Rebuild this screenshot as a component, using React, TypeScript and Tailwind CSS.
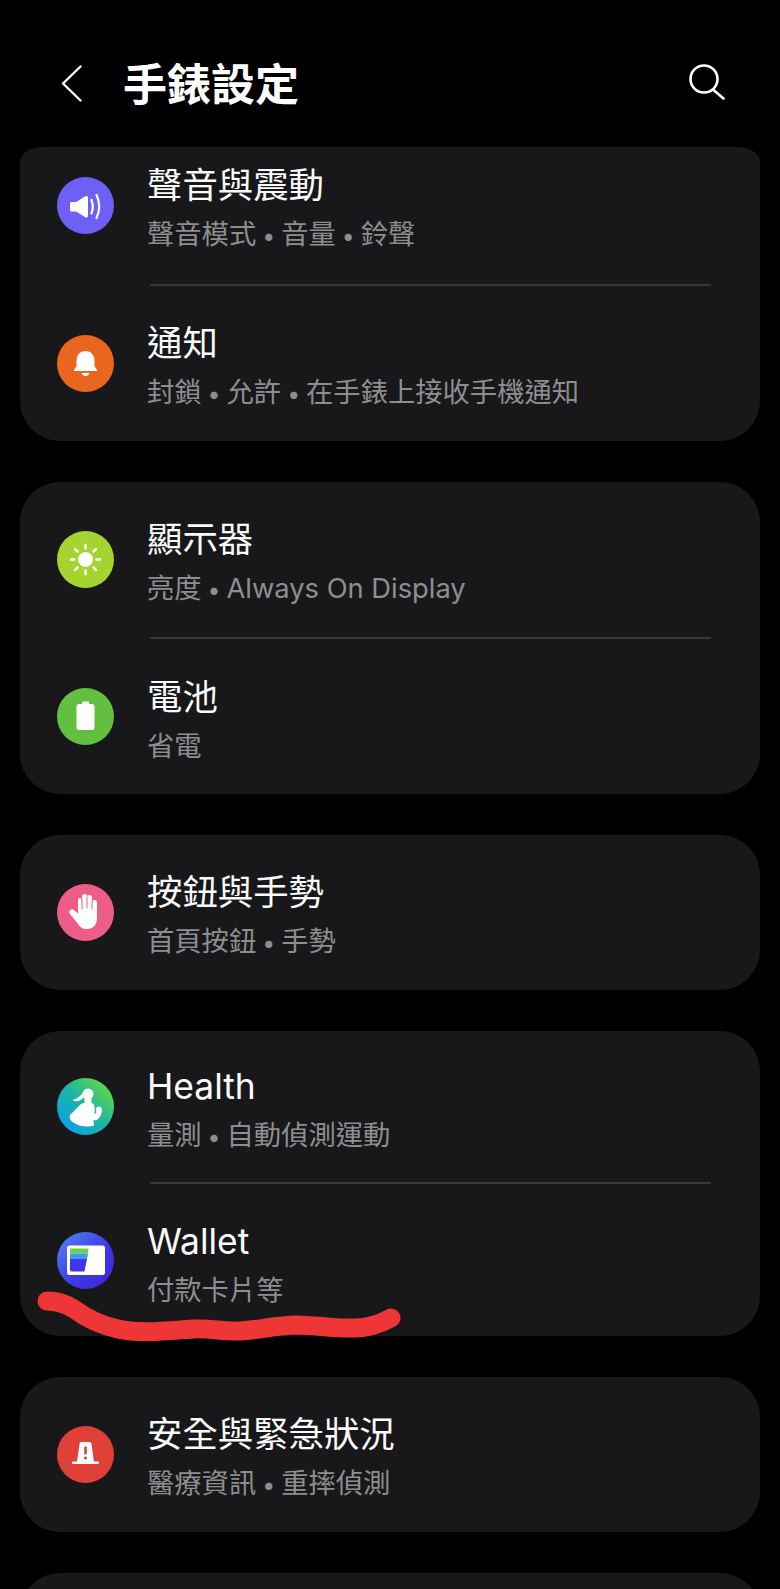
const FONT = "font-['Inter','Noto_Sans_CJK_TC','Noto_Sans_CJK_JP',sans-serif]"

function Circle({ color, children }: { color: string; children: React.ReactNode }) {
    return (
        <svg width="57" height="57" viewBox="0 0 57 57" className="shrink-0">
            <circle cx="28.5" cy="28.5" r="28.5" fill={color} />
            {children}
        </svg>
    )
}

const SoundIcon = () => (
    <Circle color="#6e60f6">
        <path d="M13 26.500q0-1.500 1.500-1.500h4.500l9-5.500q3-1.500 3 1.500v17.500q0 3-3 1.500l-9-5.500h-4.500q-1.500 0-1.500-1.500z" fill="#fff" />
        <path d="M34.500 23q2.500 6.500 0 13.500" fill="none" stroke="#fff" strokeWidth="2.200" strokeLinecap="round" />
        <path d="M39.500 18q5.500 11.500 0 23" fill="none" stroke="#fff" strokeWidth="2.200" strokeLinecap="round" />
    </Circle>
)

const BellIcon = () => (
    <Circle color="#ea651e">
        <path d="M28.500 16c-6 0-9 4.500-9 10v5.500l-2.500 3q-.5 1.500 1 1.500h21q1.500 0 1-1.500l-2.500-3V26c0-5.500-3-10-9-10z" fill="#fff" />
        <path d="M24.500 38h8q-1 3-4 3t-4-3z" fill="#fff" />
    </Circle>
)

const SunIcon = () => (
    <Circle color="#a5d32f">
        <circle cx="28.500" cy="28.500" r="7.500" fill="#fff" />
        <g stroke="#fff" strokeWidth="2.500" strokeLinecap="round">
            <path d="M28.500 14v3.500M28.500 39.500V43M14 28.500h3.500M39.500 28.500H43M18.200 18.200l2.300 2.300M36.500 36.500l2.300 2.300M18.200 38.800l2.300-2.300M36.500 20.500l2.300-2.300" />
        </g>
    </Circle>
)

const BatteryIcon = () => (
    <Circle color="#63bf3f">
        <path d="M25 14.500q0-1 1-1h5q1 0 1 1v1.500h3q2.500 0 2.500 2.500v21q0 2.500-2.500 2.500h-13q-2.500 0-2.500-2.500v-21q0-2.500 2.500-2.500H25z" fill="#fff" />
    </Circle>
)

const HandIcon = () => (
    <Circle color="#ee5c88">
        <path d="M21 26V16q0-2 2-2t2 2V12q0-2 2.500-2T30 12v.5q0-1.500 2.500-1.500t2.500 2V18q0-2 2.500-2t2.500 2v15q0 12-10.500 12-5.500 0-8-4.500L13 30q-1.500-2.500.5-4t4 .5l3.500 3z" fill="#fff" />
        <g stroke="#ee5c88" strokeWidth="1" strokeLinecap="round">
            <path d="M25 15v10M30 13v11M35 17v8" />
        </g>
    </Circle>
)

const HealthIcon = () => (
    <svg width="57" height="57" viewBox="0 0 57 57" className="shrink-0">
        <defs>
            <linearGradient id="health" x1="1" y1="0" x2="0" y2="1">
                <stop offset=".1" stopColor="#68da42" />
                <stop offset=".5" stopColor="#1bb5a6" />
                <stop offset=".9" stopColor="#0ba0e8" />
            </linearGradient>
        </defs>
        <circle cx="28.500" cy="28.500" r="28.500" fill="url(#health)" />
        <circle cx="31" cy="16" r="5.500" fill="#fff" />
        <path d="M26 15C23 18 20 21 15.500 22C19 24.500 23 23 26.500 20Z" fill="#fff" />
        <path d="M27.500 20h7v5h-7z" fill="#fff" />
        <path d="M24 26C29 23.500 33 23.500 36.500 26C38 28 38 31 37.500 36L38.500 35.500C39.500 35 39.500 33.500 39 32.500C38.500 30 40 28.500 42 28.500C44 28.500 45 30 45 32C45 35.500 43 39.500 40.500 41.500C39 42.500 38 42.500 36.500 42L37 47.500C31 49.500 22 49 15.500 44C12.500 41.500 12 38.500 13.500 36.500C17 33 20 30 24 26Z" fill="#fff" />
    </svg>
)

const WalletIcon = () => (
    <svg width="57" height="57" viewBox="0 0 57 57" className="shrink-0">
        <defs>
            <linearGradient id="wallet" x1="0" y1="0" x2="1" y2="1">
                <stop offset="0" stopColor="#4f8bf5" />
                <stop offset=".55" stopColor="#3f3ae8" />
                <stop offset="1" stopColor="#3a22d8" />
            </linearGradient>
        </defs>
        <circle cx="28.500" cy="28.500" r="28.500" fill="url(#wallet)" />
        <rect x="10" y="13.500" width="38" height="29.500" rx="2.500" fill="#fff" />
        <path d="M13 16.500h18.500L31 21.500H13z" fill="#6fd04a" />
        <path d="M13 21.500h18L30 27H13z" fill="#3d9bf0" />
        <path d="M13 27h17L27.500 39.500H15q-2 0-2-2z" fill="#3f35ea" />
    </svg>
)

const SafetyIcon = () => (
    <Circle color="#df4138">
        <path d="M22.500 18q0-2 2-2h8q2 0 2 2L37 36H20z" fill="#fff" />
        <rect x="15" y="35.500" width="27" height="2.500" rx="1" fill="#fff" />
        <rect x="27.200" y="20.500" width="2.600" height="8" rx="1" fill="#df4138" />
        <circle cx="28.500" cy="32" r="1.600" fill="#df4138" />
    </Circle>
)

function Row({ icon, title, sub, height, offset = 'pb-0' }: { icon: React.ReactNode; title: string; sub: string[]; height: string; offset?: string }) {
    return (
        <div className={`flex items-center pl-[37px] ${height} ${offset}`}>
            {icon}
            <div className="ml-[33px] mt-[12px] flex flex-col">
                <div className="text-[35.4px] leading-[48px] text-[#fafafa]">{title}</div>
                <div className="text-[27.3px] leading-[49px] text-[#8e8e90]">
                    {sub.map((part, i) => (
                        <span key={part}>
                            {i > 0 && <span className="mx-[6px] text-[23px]">•</span>}
                            {part}
                        </span>
                    ))}
                </div>
            </div>
        </div>
    )
}

const Divider = () => <div className="ml-[130px] mr-[49px] h-[2px] bg-[#39393b]" />

export default function App() {
    return (
        <div className={`relative h-[1589px] w-[780px] overflow-hidden bg-black ${FONT}`}>
            {/* Header */}
            <header className="flex h-[147px] items-start justify-between pl-[61px] pr-[55px] pt-[60px] text-white">
                <div className="flex items-center">
                    <svg width="21" height="37" viewBox="0 0 21 37" fill="none" stroke="#fff" strokeWidth="2.400" strokeLinecap="round" strokeLinejoin="round">
                        <path d="M19.500 1.500L2 18.500l17.500 17" />
                    </svg>
                    <h1 className="ml-[41px] mt-[3px] text-[44px] font-bold leading-[44px]">手錶設定</h1>
                </div>
                <svg width="37" height="37" viewBox="0 0 37 37" fill="none" stroke="#fff" strokeWidth="2.600" strokeLinecap="round" className="mt-[3px]">
                    <circle cx="16" cy="16" r="13.500" />
                    <path d="M25.500 27L35.500 35.500" />
                </svg>
            </header>

            <main className="flex flex-col gap-[41px] px-[20px]">
                <section className="rounded-b-[40px] rounded-t-[25px_14px] bg-[#18181a]">
                    <Row icon={<SoundIcon />} title="聲音與震動" sub={['聲音模式', '音量', '鈴聲']} height="h-[137px]" offset="pb-[21px]" />
                    <Divider />
                    <Row icon={<BellIcon />} title="通知" sub={['封鎖', '允許', '在手錶上接收手機通知']} height="h-[155px]" />
                </section>

                <section className="rounded-[40px] bg-[#18181a]">
                    <Row icon={<SunIcon />} title="顯示器" sub={['亮度', 'Always On Display']} height="h-[155px]" />
                    <Divider />
                    <Row icon={<BatteryIcon />} title="電池" sub={['省電']} height="h-[155px]" />
                </section>

                <section className="rounded-[40px] bg-[#18181a]">
                    <Row icon={<HandIcon />} title="按鈕與手勢" sub={['首頁按鈕', '手勢']} height="h-[155px]" />
                </section>

                <section className="rounded-[40px] bg-[#18181a]">
                    <Row icon={<HealthIcon />} title="Health" sub={['量測', '自動偵測運動']} height="h-[151px]" />
                    <Divider />
                    <Row icon={<WalletIcon />} title="Wallet" sub={['付款卡片等']} height="h-[152px]" />
                </section>

                <section className="rounded-[40px] bg-[#18181a]">
                    <Row icon={<SafetyIcon />} title="安全與緊急狀況" sub={['醫療資訊', '重摔偵測']} height="h-[155px]" />
                </section>

                <section className="h-[60px] rounded-t-[40px] bg-[#18181a]" />
            </main>

            {/* Red marker scribble drawn over the screenshot */}
            <svg width="780" height="1589" viewBox="0 0 780 1589" className="pointer-events-none absolute left-0 top-0" fill="none">
                <path
                    d="M47 1301C58 1301 66 1304 74 1309C86 1318 100 1325 118 1329C140 1334 165 1331 193 1329C212 1328 222 1332 240 1331C260 1330 270 1326 295 1325C315 1325 335 1329 355 1328C368 1328 378 1325 391 1318"
                    stroke="#ef3636"
                    strokeWidth="19"
                    strokeLinecap="round"
                    strokeLinejoin="round"
                />
            </svg>
        </div>
    )
}
